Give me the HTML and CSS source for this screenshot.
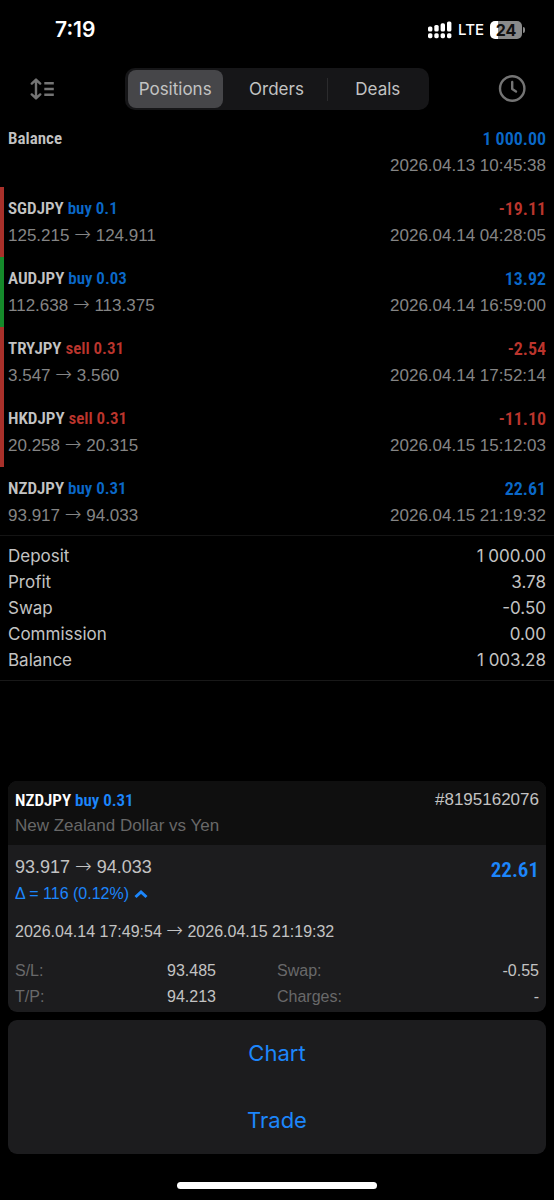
FILE: index.html
```html
<!DOCTYPE html>
<html lang="en">
<head>
<meta charset="utf-8">
<meta name="viewport" content="width=device-width, initial-scale=1">
<title>History</title>
<link rel="stylesheet" href="styles.css">
</head>
<body>
<div class="app">
  <div class="status">
    <span class="clock">7:19</span>
    <div class="status-right">
      <svg class="signal" viewBox="0 0 24 18" width="24" height="18" fill="#fff">
        <rect x="0" y="5.5" width="4.4" height="5" rx="1.6"/><rect x="6.3" y="4" width="4.4" height="6.5" rx="1.6"/>
        <rect x="12.6" y="2.3" width="4.4" height="8.2" rx="1.6"/><rect x="19" y="0.5" width="4.4" height="10" rx="1.6"/>
        <rect x="0" y="12.2" width="4.4" height="5" rx="1.6"/><rect x="6.3" y="12.2" width="4.4" height="5" rx="1.6"/>
        <rect x="12.6" y="12.2" width="4.4" height="5" rx="1.6"/><rect x="19" y="12.2" width="4.4" height="5" rx="1.6"/>
      </svg>
      <span class="network">LTE</span>
      <div class="battery">
        <span class="cell">24</span>
        <span class="tip"></span>
      </div>
    </div>
  </div>

  <header class="toolbar">
    <button class="icon-btn" type="button" aria-label="Sort">
      <svg viewBox="0 0 26 22" width="26" height="22" fill="none" stroke="#747474" stroke-width="2.4" stroke-linecap="round" stroke-linejoin="round">
        <path d="M7 2.2V19.8M2.8 5.6l4.2-4L11.2 5.6M2.8 16.4l4.2 4L11.2 16.4"/>
        <path stroke-linecap="butt" d="M15.3 5.2H24.8M15.3 11H24.8M15.3 16.8H24.8"/>
      </svg>
    </button>
    <div class="segments">
      <button class="segment active" type="button">Positions</button>
      <button class="segment" type="button">Orders</button>
      <button class="segment divided" type="button">Deals</button>
    </div>
    <button class="icon-btn" type="button" aria-label="Period">
      <svg viewBox="0 0 28 28" width="28" height="28" fill="none" stroke="#747474" stroke-width="2.4" stroke-linecap="round" stroke-linejoin="round">
        <circle cx="14.2" cy="13.5" r="12.2"/>
        <path d="M14.2 7V14L18 16.5"/>
      </svg>
    </button>
  </header>

  <main>
    <ul class="deals">
      <li class="deal"><div class="line"><b class="title">Balance</b><b class="amount blue">1 000.00</b></div><div class="line sub"><span></span><time>2026.04.13 10:45:38</time></div></li>
      <li class="deal loss"><div class="line"><b class="title">SGDJPY <span class="blue">buy 0.1</span></b><b class="amount red">-19.11</b></div><div class="line sub"><span>125.215 <span class="arrow">→</span> 124.911</span><time>2026.04.14 04:28:05</time></div></li>
      <li class="deal gain"><div class="line"><b class="title">AUDJPY <span class="blue">buy 0.03</span></b><b class="amount blue">13.92</b></div><div class="line sub"><span>112.638 <span class="arrow">→</span> 113.375</span><time>2026.04.14 16:59:00</time></div></li>
      <li class="deal loss"><div class="line"><b class="title">TRYJPY <span class="red">sell 0.31</span></b><b class="amount red">-2.54</b></div><div class="line sub"><span>3.547 <span class="arrow">→</span> 3.560</span><time>2026.04.14 17:52:14</time></div></li>
      <li class="deal loss"><div class="line"><b class="title">HKDJPY <span class="red">sell 0.31</span></b><b class="amount red">-11.10</b></div><div class="line sub"><span>20.258 <span class="arrow">→</span> 20.315</span><time>2026.04.15 15:12:03</time></div></li>
      <li class="deal"><div class="line"><b class="title">NZDJPY <span class="blue">buy 0.31</span></b><b class="amount blue">22.61</b></div><div class="line sub"><span>93.917 <span class="arrow">→</span> 94.033</span><time>2026.04.15 21:19:32</time></div></li>
    </ul>
    <dl class="summary">
      <div class="line"><dt>Deposit</dt><dd>1 000.00</dd></div>
      <div class="line"><dt>Profit</dt><dd>3.78</dd></div>
      <div class="line"><dt>Swap</dt><dd>-0.50</dd></div>
      <div class="line"><dt>Commission</dt><dd>0.00</dd></div>
      <div class="line"><dt>Balance</dt><dd>1 003.28</dd></div>
    </dl>
  </main>

  <section class="sheet">
    <article class="card">
      <div class="card-head">
        <div class="line"><b class="title">NZDJPY <span class="accent">buy 0.31</span></b><span class="ticket">#8195162076</span></div>
        <p class="name">New Zealand Dollar vs Yen</p>
      </div>
      <div class="card-body">
        <div class="line">
          <div>
            <p class="price">93.917 <span class="arrow">→</span> 94.033</p>
            <p class="delta accent">Δ = 116 (0.12%)
              <svg viewBox="0 0 14 10" width="14" height="10" fill="none" stroke="#1c86fb" stroke-width="3"><path d="M1.5 8L7 3L12.5 8"/></svg>
            </p>
          </div>
          <b class="profit accent">22.61</b>
        </div>
        <p class="period">2026.04.14 17:49:54 <span class="arrow">→</span> 2026.04.15 21:19:32</p>
        <div class="facts">
          <dl class="fact-col">
            <div class="line"><dt>S/L:</dt><dd>93.485</dd></div>
            <div class="line"><dt>T/P:</dt><dd>94.213</dd></div>
          </dl>
          <dl class="fact-col">
            <div class="line"><dt>Swap:</dt><dd>-0.55</dd></div>
            <div class="line"><dt>Charges:</dt><dd>-</dd></div>
          </dl>
        </div>
      </div>
    </article>
    <div class="actions">
      <button class="action" type="button">Chart</button>
      <button class="action" type="button">Trade</button>
    </div>
  </section>
  <div class="home"></div>
</div>
</body>
</html>
```
FILE: styles.css
```css
* { box-sizing: border-box; }
body { margin: 0; background: #000; color: #c3c3c3; font: 17px/26px "Liberation Sans", Arial, sans-serif; }
p, dl, dd, ul { margin: 0; padding: 0; }
ul { list-style: none; }
button { border: 0; padding: 0; background: none; font: inherit; color: inherit; }
svg { display: block; }
.app { display: flex; flex-direction: column; min-height: 100vh; }
.line { display: flex; justify-content: space-between; }
.blue { color: #0a68c8; }
.red { color: #bb352d; }
.accent { color: #1c86fb; }
.arrow { font-family: "DejaVu Sans", sans-serif; font-size: 20px; font-weight: 200; line-height: 1; }

.status { display: flex; justify-content: space-between; align-items: center; height: 60px; padding: 0 29px 0 55px; color: #fff; font-family: Inter, sans-serif; }
.clock { font-size: 21px; font-weight: 600; }
.status-right { display: flex; align-items: center; gap: 6px; }
.network { font-size: 15px; font-weight: 500; }
.battery { display: flex; align-items: center; gap: 1px; }
.cell { width: 32px; height: 18px; border-radius: 5px; background: linear-gradient(to right, #fff 8px, #8a8a8a 8px); color: #111; font-size: 16px; line-height: 18px; font-weight: 700; text-align: center; }
.tip { width: 2px; height: 6px; border-radius: 0 2px 2px 0; background: #8a8a8a; }

.toolbar { display: flex; justify-content: space-between; align-items: center; padding: 8px 28px 7px 29px; }
.segments { display: grid; grid-template-columns: repeat(3, 1fr); flex: 0 1 304px; padding: 2px 0; border-radius: 10px; background: #161618; }
.segment { position: relative; height: 38px; font: 17px/38px Inter, sans-serif; }
.segment.active { margin: 0 3px 0 3px; border-radius: 8px; background: #464649; }
.divided::before { content: ""; position: absolute; left: 0; top: 8px; bottom: 7px; width: 1px; background: #2b2b2d; }

.deal { padding: 8px 8px 7px 4px; border-left: 4px solid transparent; }
.deal:last-child { padding-bottom: 5px; }
.deal.loss { border-left-color: #a8302a; }
.deal.gain { border-left-color: #158a2b; }
.deal .line { line-height: 27px; }
.deal .sub { line-height: 28px; color: #858585; }
.title, .amount, .profit { font-family: "Roboto Condensed", "Liberation Sans Narrow", sans-serif; font-size: 18px; font-weight: 600; }
.title { font-size: 17px; }
.summary { padding: 7px 8px; border-top: 1px solid #141414; border-bottom: 1px solid #181818; font-family: Inter, sans-serif; }

.sheet { display: flex; flex-direction: column; gap: 8px; margin-top: auto; padding: 24px 8px 28px; }
.card { overflow: hidden; border-radius: 9px; background: #1c1c1e; }
.card-head { padding: 6px 7px; background: #0f0f0f; }
.card-head .title { color: #fff; }
.name { color: #686868; }
.card-body { padding: 9px 7px 2px; }
.price { font-size: 18px; }
.delta { display: flex; align-items: center; gap: 5px; font-size: 16px; line-height: 28px; }
.profit { padding-top: 3px; font-size: 21px; }
.period { padding: 11px 0 13px; font-size: 16px; }
.facts { display: grid; grid-template-columns: 1fr 1fr; font-size: 16px; }
.fact-col dt { color: #69696a; }
.fact-col:first-child { padding-right: 61px; }
.actions { display: grid; border-radius: 9px; background: #1c1c1e; }
.action { height: 67px; color: #1c86fb; font: 22px/67px Inter, sans-serif; }
.home { width: 36%; height: 7px; margin: 0 auto 11px; border-radius: 4px; background: #fff; }
```
